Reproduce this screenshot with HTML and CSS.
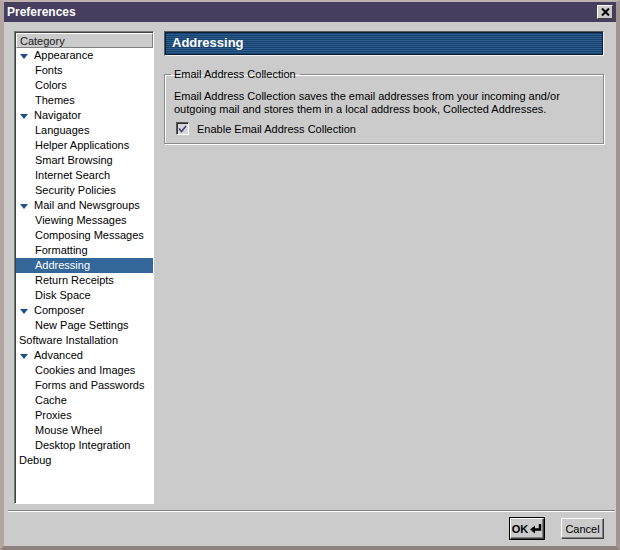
FILE: index.html
```html
<!DOCTYPE html>
<html>
<head>
<meta charset="utf-8">
<link rel="stylesheet" href="styles.css">
</head>
<body>
<div class="window">
  <div class="titlebar">
    <span class="title">Preferences</span>
    <span class="close"><svg width="9" height="8" viewBox="0 0 9 8"><path d="M1 0.5L8 7.5M8 0.5L1 7.5" stroke="#000" stroke-width="2"/></svg></span>
  </div>
  <div class="main">
    <div class="tree">
      <div class="tree-head">Category</div>
      <div class="row parent"><span class="twisty"><svg width="8" height="5" viewBox="0 0 8 5"><path d="M0 0H8L4 5Z" fill="#1f5088"/></svg></span>Appearance</div>
      <div class="row child">Fonts</div>
      <div class="row child">Colors</div>
      <div class="row child">Themes</div>
      <div class="row parent"><span class="twisty"><svg width="8" height="5" viewBox="0 0 8 5"><path d="M0 0H8L4 5Z" fill="#1f5088"/></svg></span>Navigator</div>
      <div class="row child">Languages</div>
      <div class="row child">Helper Applications</div>
      <div class="row child">Smart Browsing</div>
      <div class="row child">Internet Search</div>
      <div class="row child">Security Policies</div>
      <div class="row parent"><span class="twisty"><svg width="8" height="5" viewBox="0 0 8 5"><path d="M0 0H8L4 5Z" fill="#1f5088"/></svg></span>Mail and Newsgroups</div>
      <div class="row child">Viewing Messages</div>
      <div class="row child">Composing Messages</div>
      <div class="row child">Formatting</div>
      <div class="row child selected">Addressing</div>
      <div class="row child">Return Receipts</div>
      <div class="row child">Disk Space</div>
      <div class="row parent"><span class="twisty"><svg width="8" height="5" viewBox="0 0 8 5"><path d="M0 0H8L4 5Z" fill="#1f5088"/></svg></span>Composer</div>
      <div class="row child">New Page Settings</div>
      <div class="row leaf">Software Installation</div>
      <div class="row parent"><span class="twisty"><svg width="8" height="5" viewBox="0 0 8 5"><path d="M0 0H8L4 5Z" fill="#1f5088"/></svg></span>Advanced</div>
      <div class="row child">Cookies and Images</div>
      <div class="row child">Forms and Passwords</div>
      <div class="row child">Cache</div>
      <div class="row child">Proxies</div>
      <div class="row child">Mouse Wheel</div>
      <div class="row child">Desktop Integration</div>
      <div class="row leaf">Debug</div>
    </div>
    <div class="panel">
      <div class="panel-head">Addressing</div>
      <fieldset class="group">
        <legend>Email Address Collection</legend>
        <p class="desc">Email Address Collection saves the email addresses from your incoming and/or outgoing mail and stores them in a local address book, Collected Addresses.</p>
        <div class="check-row">
          <span class="checkbox"><svg width="9" height="8" viewBox="0 0 9 8"><path d="M1 3.5L3.5 6.5L8 1" stroke="#3f3d7a" stroke-width="1.5" fill="none"/></svg></span>
          <span>Enable Email Address Collection</span>
        </div>
      </fieldset>
    </div>
  </div>
  <div class="separator"></div>
  <div class="footer">
    <button class="btn default"><span>OK</span><svg class="enter" width="12" height="10" viewBox="0 0 12 10"><path d="M10 0V5.5H4" stroke="#000" stroke-width="2.4" fill="none"/><path d="M0 5.5L5 1.5V9.5Z" fill="#000"/></svg></button>
    <button class="btn">Cancel</button>
  </div>
</div>
</body>
</html>
```

FILE: styles.css
```css
* { box-sizing: border-box; }
html, body { margin: 0; padding: 0; }
body {
  width: 620px;
  height: 550px;
  font-family: "Liberation Sans", Arial, sans-serif;
  font-size: 11px;
  color: #000;
  background: #cbcbcb;
}
.window {
  width: 620px;
  height: 550px;
  background: #cbcbcb;
  border-style: solid;
  border-width: 2px 4px 4px 4px;
  border-color: #bdb2ae #a2948f #8f817c #b3a5a0;
  display: flex;
  flex-direction: column;
}
.titlebar {
  height: 20px;
  background: #463e5e;
  display: flex;
  align-items: center;
  justify-content: space-between;
  padding: 0 3px 0 3px;
}
.title {
  color: #fff;
  font-weight: bold;
  font-size: 12px;
}
.close {
  width: 16px;
  height: 14px;
  background: #cbcbcb;
  border: 1px solid;
  border-color: #fff #404040 #404040 #fff;
  display: flex;
  align-items: center;
  justify-content: center;
}
.main {
  display: flex;
  gap: 10px;
  padding: 9px 12px 0 10px;
  height: 482px;
}
.tree {
  width: 140px;
  height: 473px;
  background: #fff;
  border: 1px solid;
  border-color: #7a7a7a #fff #fff #7a7a7a;
  box-shadow: inset 1px 1px 0 #404040;
  padding: 1px 0 0 1px;
}
.tree-head {
  height: 15px;
  line-height: 14px;
  background: #cbcbcb;
  border: 1px solid;
  border-color: #fff #808080 #808080 #fff;
  padding-left: 3px;
  color: #202020;
}
.row {
  height: 15px;
  line-height: 15px;
  white-space: nowrap;
  display: flex;
  align-items: center;
}
.parent { padding-left: 4px; }
.twisty {
  width: 14px;
  display: inline-flex;
  align-items: center;
  padding-top: 1px;
}
.child { padding-left: 19px; }
.leaf { padding-left: 3px; }
.selected {
  background: #336699;
  color: #fff;
}
.panel {
  flex: 1;
  display: flex;
  flex-direction: column;
}
.panel-head {
  height: 25px;
  border: 1px solid;
  border-color: #5a5a5a #f0f0f0 #f0f0f0 #5a5a5a;
  box-shadow: inset 1px 1px 0 #0d2036, inset -1px -1px 0 #0d2036;
  background: repeating-linear-gradient(to bottom, #2d5d8e 0, #2d5d8e 1px, #17416d 1px, #17416d 2px);
  color: #fff;
  font-weight: bold;
  font-size: 13px;
  line-height: 22px;
  padding-left: 7px;
}
.group {
  margin: 12px 0 0 0;
  padding: 6px 9px 8px 9px;
  border: 1px solid #8a8a8a;
  box-shadow: 1px 1px 0 #fff, inset 1px 1px 0 #fff;
  min-width: 0;
}
.group legend {
  padding: 0 4px 0 3px;
  margin-left: -3px;
  color: #000;
}
.desc {
  margin: 4px 0 0 0;
  line-height: 13px;
}
.check-row {
  display: flex;
  align-items: center;
  margin-top: 6px;
  gap: 8px;
}
.checkbox {
  width: 13px;
  height: 13px;
  border: 1px solid;
  border-color: #5a5a5a #fff #fff #5a5a5a;
  box-shadow: inset 1px 1px 0 #303030;
  background: #d7d7d7;
  display: inline-flex;
  align-items: center;
  justify-content: center;
  margin-left: 2px;
}
.separator {
  margin: 6px 0 0 4px;
  width: 607px;
  height: 2px;
  border-top: 1px solid #808080;
  border-bottom: 1px solid #fff;
}
.footer {
  display: flex;
  justify-content: flex-end;
  gap: 17px;
  padding: 6px 12px 0 0;
}
.btn {
  height: 21px;
  font-family: "Liberation Sans", Arial, sans-serif;
  font-size: 11px;
  background: #cbcbcb;
  border: 1px solid;
  border-color: #fff #404040 #404040 #fff;
  box-shadow: inset -1px -1px 0 #808080;
  padding: 0;
  color: #000;
  display: flex;
  align-items: center;
  justify-content: center;
}
.btn.default {
  width: 34px;
  font-weight: bold;
  outline: 1px solid #000;
  gap: 2px;
}
.enter { flex-shrink: 0; }
.btn:not(.default) { width: 43px; }
```
